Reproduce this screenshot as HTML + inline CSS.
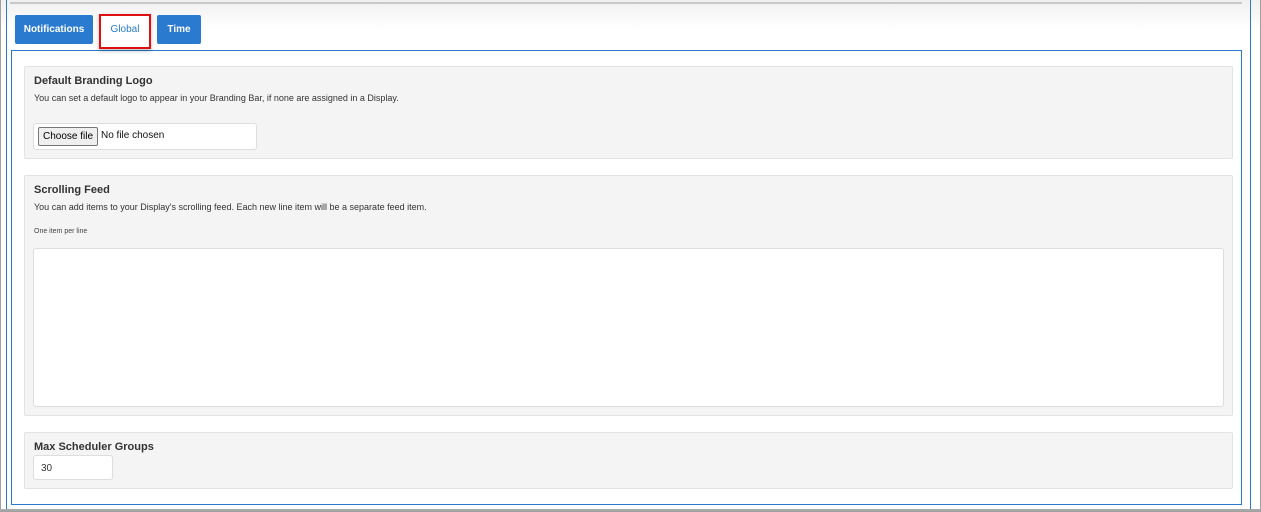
<!DOCTYPE html>
<html><head><style>
*{box-sizing:border-box;margin:0;padding:0}
body{width:1261px;height:512px;background:#fff;position:relative;overflow:hidden;font-family:"Liberation Sans",Arial,sans-serif;color:#333}
.abs{position:absolute}
.btn{position:absolute;top:15px;height:29px;background:#2a7bd0;color:#fff;font-size:10px;font-weight:bold;border-radius:2px;display:flex;align-items:center;justify-content:center}
.sec{position:absolute;left:24px;width:1209px;background:#f4f4f4;border:1px solid #e3e3e3;border-radius:2px}
.sec h3{position:absolute;left:9px;font-size:11px;font-weight:bold;color:#333}
.sec p{position:absolute;left:9px;font-size:9px;color:#333}
</style></head><body>
<div class="abs" style="left:0;top:0;width:1261px;height:30px;background:linear-gradient(#f0f0f0,#fff)"></div>
<div class="abs" style="left:0;top:0;width:1261px;height:512px;border:1px solid #a0a0a0;border-top:none"></div>
<div class="abs" style="left:10px;top:2px;width:1232px;height:2px;background:#c8c8c8"></div>
<div class="abs" style="left:6px;top:0;width:1px;height:510px;background:#2a7bd0"></div>
<div class="abs" style="left:1250px;top:0;width:1px;height:510px;background:#2a7bd0"></div>
<div class="abs" style="left:0;top:509px;width:1261px;height:2px;background:#a8a8a8"></div>
<div class="abs" style="left:11px;top:50px;width:1231px;height:455px;border:1px solid #2a7bd0"></div>
<div class="btn" style="left:15px;width:78px">Notifications</div>
<div class="abs" style="left:99px;top:14px;width:52px;height:35px;border:2px solid #e01010;background:#fff;box-shadow:0 2px 4px rgba(0,0,0,.25);color:#2a7bd0;font-size:10px;display:flex;align-items:center;justify-content:center;padding-bottom:4px">Global</div>
<div class="btn" style="left:157px;width:44px">Time</div>

<div class="sec" style="top:66px;height:93px">
<h3 style="top:8px">Default Branding Logo</h3>
<p style="top:26px">You can set a default logo to appear in your Branding Bar, if none are assigned in a Display.</p>
<div class="abs" style="left:8px;top:56px;width:224px;height:27px;background:#fff;border:1px solid #ddd;border-radius:3px"></div>
<div class="abs" style="left:13px;top:60px;width:60px;height:19px;background:#efefef;border:1px solid #767676;border-radius:2px;font-size:10px;color:#000;display:flex;align-items:center;justify-content:center">Choose file</div>
<div class="abs" style="left:76px;top:63px;font-size:10px;color:#111">No file chosen</div>
</div>

<div class="sec" style="top:175px;height:241px">
<h3 style="top:8px">Scrolling Feed</h3>
<p style="top:26px">You can add items to your Display's scrolling feed. Each new line item will be a separate feed item.</p>
<p style="top:52px;font-size:7px;color:#444">One item per line</p>
<div class="abs" style="left:8px;top:72px;width:1191px;height:159px;background:#fff;border:1px solid #ddd;border-radius:3px"></div>
</div>

<div class="sec" style="top:432px;height:57px">
<h3 style="top:8px">Max Scheduler Groups</h3>
<div class="abs" style="left:8px;top:22px;width:80px;height:25px;background:#fff;border:1px solid #ddd;border-radius:3px;font-size:10px;padding:7px 0 0 7px">30</div>
</div>
</body></html>
